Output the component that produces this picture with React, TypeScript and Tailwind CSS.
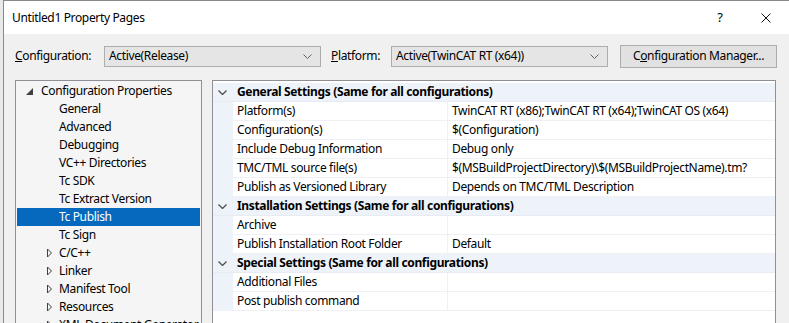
import React from 'react';

const treeItems: { label: string; depth: number; expander?: 'open' | 'closed'; selected?: boolean }[] = [
  { label: 'Configuration Properties', depth: 0, expander: 'open' },
  { label: 'General', depth: 1 },
  { label: 'Advanced', depth: 1 },
  { label: 'Debugging', depth: 1 },
  { label: 'VC++ Directories', depth: 1 },
  { label: 'Tc SDK', depth: 1 },
  { label: 'Tc Extract Version', depth: 1 },
  { label: 'Tc Publish', depth: 1, selected: true },
  { label: 'Tc Sign', depth: 1 },
  { label: 'C/C++', depth: 1, expander: 'closed' },
  { label: 'Linker', depth: 1, expander: 'closed' },
  { label: 'Manifest Tool', depth: 1, expander: 'closed' },
  { label: 'Resources', depth: 1, expander: 'closed' },
  { label: 'XML Document Generator', depth: 1, expander: 'closed' },
];

type Row = { kind: 'header'; title: string } | { kind: 'prop'; name: string; value: string };

const rows: Row[] = [
  { kind: 'header', title: 'General Settings (Same for all configurations)' },
  { kind: 'prop', name: 'Platform(s)', value: 'TwinCAT RT (x86);TwinCAT RT (x64);TwinCAT OS (x64)' },
  { kind: 'prop', name: 'Configuration(s)', value: '$(Configuration)' },
  { kind: 'prop', name: 'Include Debug Information', value: 'Debug only' },
  { kind: 'prop', name: 'TMC/TML source file(s)', value: '$(MSBuildProjectDirectory)\\$(MSBuildProjectName).tm?' },
  { kind: 'prop', name: 'Publish as Versioned Library', value: 'Depends on TMC/TML Description' },
  { kind: 'header', title: 'Installation Settings (Same for all configurations)' },
  { kind: 'prop', name: 'Archive', value: '' },
  { kind: 'prop', name: 'Publish Installation Root Folder', value: 'Default' },
  { kind: 'header', title: 'Special Settings (Same for all configurations)' },
  { kind: 'prop', name: 'Additional Files', value: '' },
  { kind: 'prop', name: 'Post publish command', value: '' },
];

function ComboChevron() {
  return (
    <svg width="9" height="5" viewBox="0 0 9 5" className="shrink-0">
      <path d="M0.5 0.5 L4.5 4.5 L8.5 0.5" fill="none" stroke="#606060" strokeWidth="1" />
    </svg>
  );
}

function Combo({ value, width }: { value: string; width: string }) {
  return (
    <div className={`flex h-[21px] shrink-0 ${width} items-center justify-between border border-[#adadad] bg-[#e5e5e5] pl-[4px] pr-[8px]`}>
      <span>{value}</span>
      <ComboChevron />
    </div>
  );
}

function Expander({ kind }: { kind: 'open' | 'closed' }) {
  if (kind === 'open') {
    return (
      <svg width="7" height="7" viewBox="0 0 7 7" className="shrink-0">
        <path d="M7 0 L7 7 L0 7 Z" fill="#404040" />
      </svg>
    );
  }
  return (
    <svg width="7" height="10" viewBox="0 0 7 10" className="shrink-0">
      <path d="M1.5 1 L5.5 5 L1.5 9 Z" fill="none" stroke="#404040" strokeWidth="1" />
    </svg>
  );
}

export default function App() {
  return (
    <div className="flex h-[323px] w-[789px] overflow-hidden bg-[#e9e9e9] font-['Segoe_UI','Noto_Sans',sans-serif] text-[12px] tracking-[-0.35px] text-black">
      <div className="ml-[3px] flex flex-1 flex-col overflow-hidden border-l border-t border-[#8a8a8a] bg-[#f0f0f0]">
        {/* title bar */}
        <div className="flex h-[33px] shrink-0 items-center justify-between bg-white pl-[8px]">
          <span>Untitled1 Property Pages</span>
          <div className="flex items-center">
            <span className="w-[46px] text-center text-[13px]">?</span>
            <div className="flex w-[46px] justify-center">
              <svg width="10" height="10" viewBox="0 0 10 10">
                <path d="M0.5 0.5 L9.5 9.5 M9.5 0.5 L0.5 9.5" stroke="#111" strokeWidth="1" />
              </svg>
            </div>
          </div>
        </div>

        {/* config row */}
        <div className="mt-[11px] flex h-[22px] shrink-0 items-center pl-[11px]">
          <span className="w-[89px] shrink-0">
            <span className="underline">C</span>onfiguration:
          </span>
          <Combo value="Active(Release)" width="w-[217px]" />
          <span className="ml-[10px] w-[60px] shrink-0">
            <span className="underline">P</span>latform:
          </span>
          <Combo value="Active(TwinCAT RT (x64))" width="w-[217px]" />
          <div className="ml-[12px] flex h-[23px] w-[157px] shrink-0 items-center justify-center border border-[#adadad] bg-[#e1e1e1]">
            C<span className="underline">o</span>nfiguration Manager...
          </div>
        </div>

        {/* panels */}
        <div className="mt-[13px] flex min-h-0 flex-1 gap-[10px] pl-[11px]">
          <div className="w-[187px] shrink-0 overflow-hidden border border-b-0 border-[#8f8f95] bg-[#f5f5f5] pt-[1px] pl-[1px] pr-[1px]">
            {treeItems.map((item) => (
              <div
                key={item.label}
                className={`flex h-[18px] shrink-0 items-center whitespace-nowrap ${item.selected ? 'bg-[#0669bd] text-white' : ''}`}
              >
                <div className={`flex shrink-0 items-center ${item.depth === 0 ? 'w-[24px] pl-[9px]' : 'w-[42px] pl-[29px]'}`}>
                  {item.expander && <Expander kind={item.expander} />}
                </div>
                <span>{item.label}</span>
              </div>
            ))}
          </div>

          <div className="w-[564px] shrink-0 overflow-hidden border border-b-0 border-[#8f8f95] bg-white pt-[2px]">
            {rows.map((row, i) =>
              row.kind === 'header' ? (
                <div key={i} className="flex h-[19px] items-center border-b border-[#e8ecf2] bg-[#eef3f9]">
                  <div className="flex w-[18px] shrink-0 justify-center pl-[1px]">
                    <svg width="9" height="5" viewBox="0 0 9 5">
                      <path d="M0.5 0.5 L4.5 4.5 L8.5 0.5" fill="none" stroke="#505050" strokeWidth="1.3" />
                    </svg>
                  </div>
                  <span className="pl-[6px] font-bold whitespace-nowrap">{row.title}</span>
                </div>
              ) : (
                <div key={i} className="flex h-[19px] items-stretch">
                  <div className="w-[20px] shrink-0 bg-[#eef3f9]" />
                  <div className="flex w-[215px] shrink-0 items-center border-b border-r border-[#eef0f3] pl-[4px] whitespace-nowrap">{row.name}</div>
                  <div className="flex flex-1 items-center border-b border-[#eef0f3] pl-[4px] whitespace-nowrap">{row.value}</div>
                </div>
              ),
            )}
          </div>
        </div>
      </div>
    </div>
  );
}
